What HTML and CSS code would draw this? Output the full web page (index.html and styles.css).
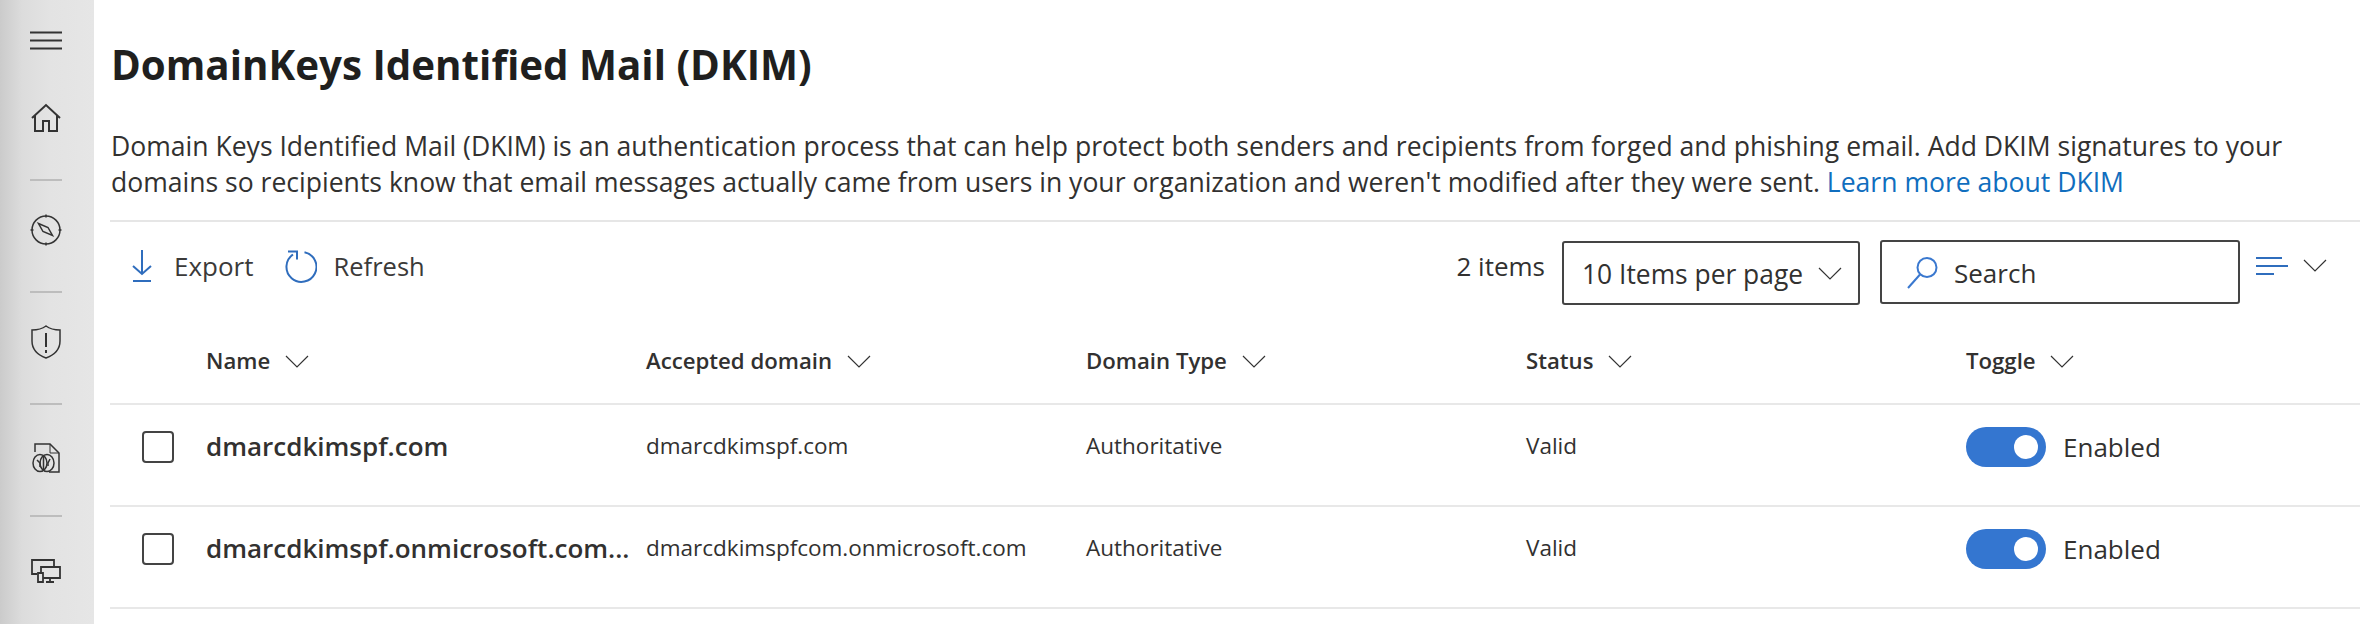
FILE: index.html
```html
<!DOCTYPE html>
<html lang="en">
<head>
    <meta charset="UTF-8">
    <title>DomainKeys Identified Mail (DKIM)</title>
    <link rel="stylesheet" href="styles.css">
</head>
<body>
    <nav class="sidebar">
        <div class="menu-btn">
            <svg width="32" height="20" viewBox="0 0 32 20"><path d="M0 1.500h32M0 9.500h32M0 17.500h32" stroke="#333" stroke-width="2" fill="none"/></svg>
        </div>
        <div class="nav-item">
            <svg width="30" height="30" viewBox="0 0 30 30" fill="none" stroke="#333" stroke-width="2"><path d="M1 15 15 2l14 13M4 12v16h8v-10h6v10h8V12"/></svg>
        </div>
        <div class="nav-item">
            <svg width="32" height="32" viewBox="0 0 32 32" fill="none" stroke="#333" stroke-width="1.500"><circle cx="16" cy="16" r="14"/><path d="M16 0.500v3M16 28.500v3M0.500 16h3M28.500 16h3"/><path d="M8.500 9.500l9.500 4 4.500 8-9.500-4z"/></svg>
        </div>
        <div class="nav-item">
            <svg width="32" height="34" viewBox="0 0 32 34" fill="none" stroke="#333" stroke-width="1.500"><path d="M16 1c4 3 9 4 14 4v11c0 8-6 14-14 17C8 30 2 24 2 16V5c5 0 10-1 14-4z"/><path d="M16 8v14M16 25v3" stroke-width="2"/></svg>
        </div>
        <div class="nav-item nav-doc">
            <svg width="28" height="30" viewBox="0 0 28 30" fill="none" stroke="#333" stroke-width="1.500"><path d="M3 9V1h15l9 9v19H17"/><path d="M18 1v9h9" stroke-width="1"/><ellipse cx="8" cy="20" rx="7" ry="8.500"/><ellipse cx="15" cy="20" rx="7" ry="8.500"/><path d="M11.500 12v16M5 17l3 3v4M18 16l-2 4v3"/></svg>
        </div>
        <div class="nav-item nav-doc">
            <svg width="30" height="24" viewBox="0 0 30 24" fill="none" stroke="#333" stroke-width="1.800"><path d="M6 15H1V1h22v7"/><path d="M10 8h19v11H10zM19 19v3M15 23h8"/><path d="M7 14h5v9H7z" fill="#e4e4e4"/></svg>
        </div>
    </nav>

    <main class="content">
        <h1>DomainKeys Identified Mail (DKIM)</h1>
        <p class="intro">Domain Keys Identified Mail (DKIM) is an authentication process that can help protect both senders and recipients from forged and phishing email. Add DKIM signatures to your domains so recipients know that email messages actually came from users in your organization and weren't modified after they were sent. <a href="#">Learn more about DKIM</a></p>

        <div class="toolbar">
            <div class="tool tool-export">
                <svg width="20" height="32" viewBox="0 0 20 32" fill="none" stroke="#2f6dbd" stroke-width="2"><path d="M10 0v24M1 16l9 8 9-8"/><path d="M1 31h18"/></svg>
                <span>Export</span>
            </div>
            <div class="tool tool-refresh">
                <svg width="32" height="33" viewBox="0 0 32 33" fill="none" stroke="#2f6dbd" stroke-width="2"><path d="M19.500 2.200A15 15 0 1 1 8 4.500"/><path d="M3 1.500h9v8"/></svg>
                <span>Refresh</span>
            </div>
            <div class="toolbar-right">
                <span class="count">2 items</span>
                <div class="select">
                    <span>10 Items per page</span>
                    <svg class="chev" width="24" height="14" viewBox="0 0 24 14"><path d="M1 1l11 11L23 1" fill="none" stroke="#333" stroke-width="1.200"/></svg>
                </div>
                <div class="search">
                    <svg width="32" height="33" viewBox="0 0 32 33" fill="none" stroke="#3a78cf" stroke-width="2"><circle cx="20" cy="11.500" r="9.500"/><path d="M13 18.500 1 32"/></svg>
                    <span>Search</span>
                </div>
                <div class="filter">
                    <svg width="32" height="20" viewBox="0 0 32 20" fill="none" stroke="#2f6dbd" stroke-width="2"><path d="M0 2h26M0 10h32M0 18h18"/></svg>
                    <svg class="chev" width="24" height="14" viewBox="0 0 24 14"><path d="M1 1l11 11L23 1" fill="none" stroke="#333" stroke-width="1.200"/></svg>
                </div>
            </div>
        </div>

        <table>
            <colgroup>
                <col class="col-check"><col class="col-main"><col class="col-main"><col class="col-main"><col class="col-main"><col>
            </colgroup>
            <thead>
                <tr>
                    <th></th>
                    <th>Name <svg class="chev" width="24" height="14" viewBox="0 0 24 14"><path d="M1 1l11 11L23 1" fill="none" stroke="#333" stroke-width="1.200"/></svg></th>
                    <th>Accepted domain <svg class="chev" width="24" height="14" viewBox="0 0 24 14"><path d="M1 1l11 11L23 1" fill="none" stroke="#333" stroke-width="1.200"/></svg></th>
                    <th>Domain Type <svg class="chev" width="24" height="14" viewBox="0 0 24 14"><path d="M1 1l11 11L23 1" fill="none" stroke="#333" stroke-width="1.200"/></svg></th>
                    <th>Status <svg class="chev" width="24" height="14" viewBox="0 0 24 14"><path d="M1 1l11 11L23 1" fill="none" stroke="#333" stroke-width="1.200"/></svg></th>
                    <th>Toggle <svg class="chev" width="24" height="14" viewBox="0 0 24 14"><path d="M1 1l11 11L23 1" fill="none" stroke="#333" stroke-width="1.200"/></svg></th>
                </tr>
            </thead>
            <tbody>
                <tr>
                    <td><span class="checkbox"></span></td>
                    <td class="name">dmarcdkimspf.com</td>
                    <td>dmarcdkimspf.com</td>
                    <td>Authoritative</td>
                    <td>Valid</td>
                    <td><div class="toggle-cell"><span class="toggle"><span class="knob"></span></span>Enabled</div></td>
                </tr>
                <tr>
                    <td><span class="checkbox"></span></td>
                    <td class="name">dmarcdkimspf.onmicrosoft.com...</td>
                    <td>dmarcdkimspfcom.onmicrosoft.com</td>
                    <td>Authoritative</td>
                    <td>Valid</td>
                    <td><div class="toggle-cell"><span class="toggle"><span class="knob"></span></span>Enabled</div></td>
                </tr>
            </tbody>
        </table>
    </main>
</body>
</html>
```

FILE: styles.css
```css
* {
    margin: 0;
    padding: 0;
    box-sizing: border-box;
}

html, body {
    height: 100%;
    overflow: hidden;
}

body {
    display: flex;
    font-family: "Open Sans", "Noto Sans", Arial, sans-serif;
    color: #323130;
    background: #fff;
}

.sidebar {
    flex: 0 0 94px;
    height: 100%;
    background: linear-gradient(to right, #cbcbcb 0, #dcdcdc 22px, #e3e3e3 50px, #e6e6e6 100%);
}

.menu-btn {
    height: 69px;
    padding: 31px 0 0 30px;
}

.menu-btn svg {
    display: block;
}

.nav-item {
    height: 112px;
    margin-left: 30px;
    width: 32px;
    padding-bottom: 12px;
    display: flex;
    align-items: center;
    justify-content: center;
    border-bottom: 2px solid #bdbdbd;
}

.nav-doc {
    padding-bottom: 4px;
}

.nav-item:last-child {
    border-bottom: none;
}

.content {
    flex: 1;
    min-width: 0;
    padding: 40px 0 0 16px;
}

h1 {
    font-size: 40.3px;
    line-height: 50px;
    font-weight: 700;
    color: #201f1e;
    margin-left: 1px;
}

.intro {
    margin-top: 38px;
    font-size: 26.55px;
    line-height: 36px;
    padding-bottom: 20px;
    padding-right: 60px;
    margin-left: 1px;
}

.intro a {
    color: #106ebe;
    text-decoration: none;
}

.toolbar {
    display: flex;
    align-items: flex-start;
    border-top: 2px solid #e6e6e6;
    height: 92px;
    font-size: 26px;
}

.tool {
    display: flex;
    align-items: center;
    height: 88px;
    color: #3b3a39;
}

.tool-export {
    margin-left: 22px;
    gap: 22px;
}

.tool-refresh {
    margin-left: 31px;
    gap: 17px;
    font-size: 25.5px;
}

.toolbar-right {
    margin-left: auto;
    display: flex;
    align-items: flex-start;
    padding-right: 33px;
}

.count {
    line-height: 88px;
    margin-right: 17px;
}

.select, .search {
    display: flex;
    align-items: center;
    height: 64px;
    margin-top: 18px;
    border: 2px solid #444;
    border-radius: 3px;
}

.select {
    width: 298px;
    margin-top: 19px;
    padding: 2px 16px 0 18px;
    justify-content: space-between;
    font-size: 26.4px;
}

.search {
    width: 360px;
    margin-left: 20px;
    padding: 1px 0 0 25px;
    gap: 15px;
}

.filter {
    display: flex;
    align-items: center;
    gap: 15px;
    margin: 34px 0 0 16px;
}

table {
    width: 100%;
    border-collapse: collapse;
    table-layout: fixed;
    font-size: 22.5px;
}

.col-check {
    width: 96px;
}

.col-main {
    width: 440px;
}

th {
    height: 92px;
    padding-top: 6px;
    text-align: left;
    font-weight: 600;
    white-space: nowrap;
    font-size: 22.2px;
}

th .chev {
    margin-left: 9px;
}

td {
    height: 102px;
    padding-bottom: 19px;
    border-top: 2px solid #e8e8e8;
    white-space: nowrap;
}

tbody tr:last-child td {
    border-bottom: 2px solid #e8e8e8;
}

.checkbox {
    display: block;
    width: 32px;
    height: 32px;
    margin: 3px 0 0 32px;
    border: 2px solid #444;
    border-radius: 4px;
}

.name {
    font-size: 26px;
    font-weight: 600;
}

.toggle-cell {
    display: flex;
    align-items: center;
    gap: 17px;
    margin-top: 3px;
    font-size: 26px;
}

.toggle {
    display: flex;
    align-items: center;
    justify-content: flex-end;
    width: 80px;
    height: 40px;
    padding-right: 8px;
    background: #3476d0;
    border-radius: 20px;
}

.knob {
    width: 24px;
    height: 24px;
    background: #fff;
    border-radius: 50%;
}

.chev {
    flex: none;
}
```
